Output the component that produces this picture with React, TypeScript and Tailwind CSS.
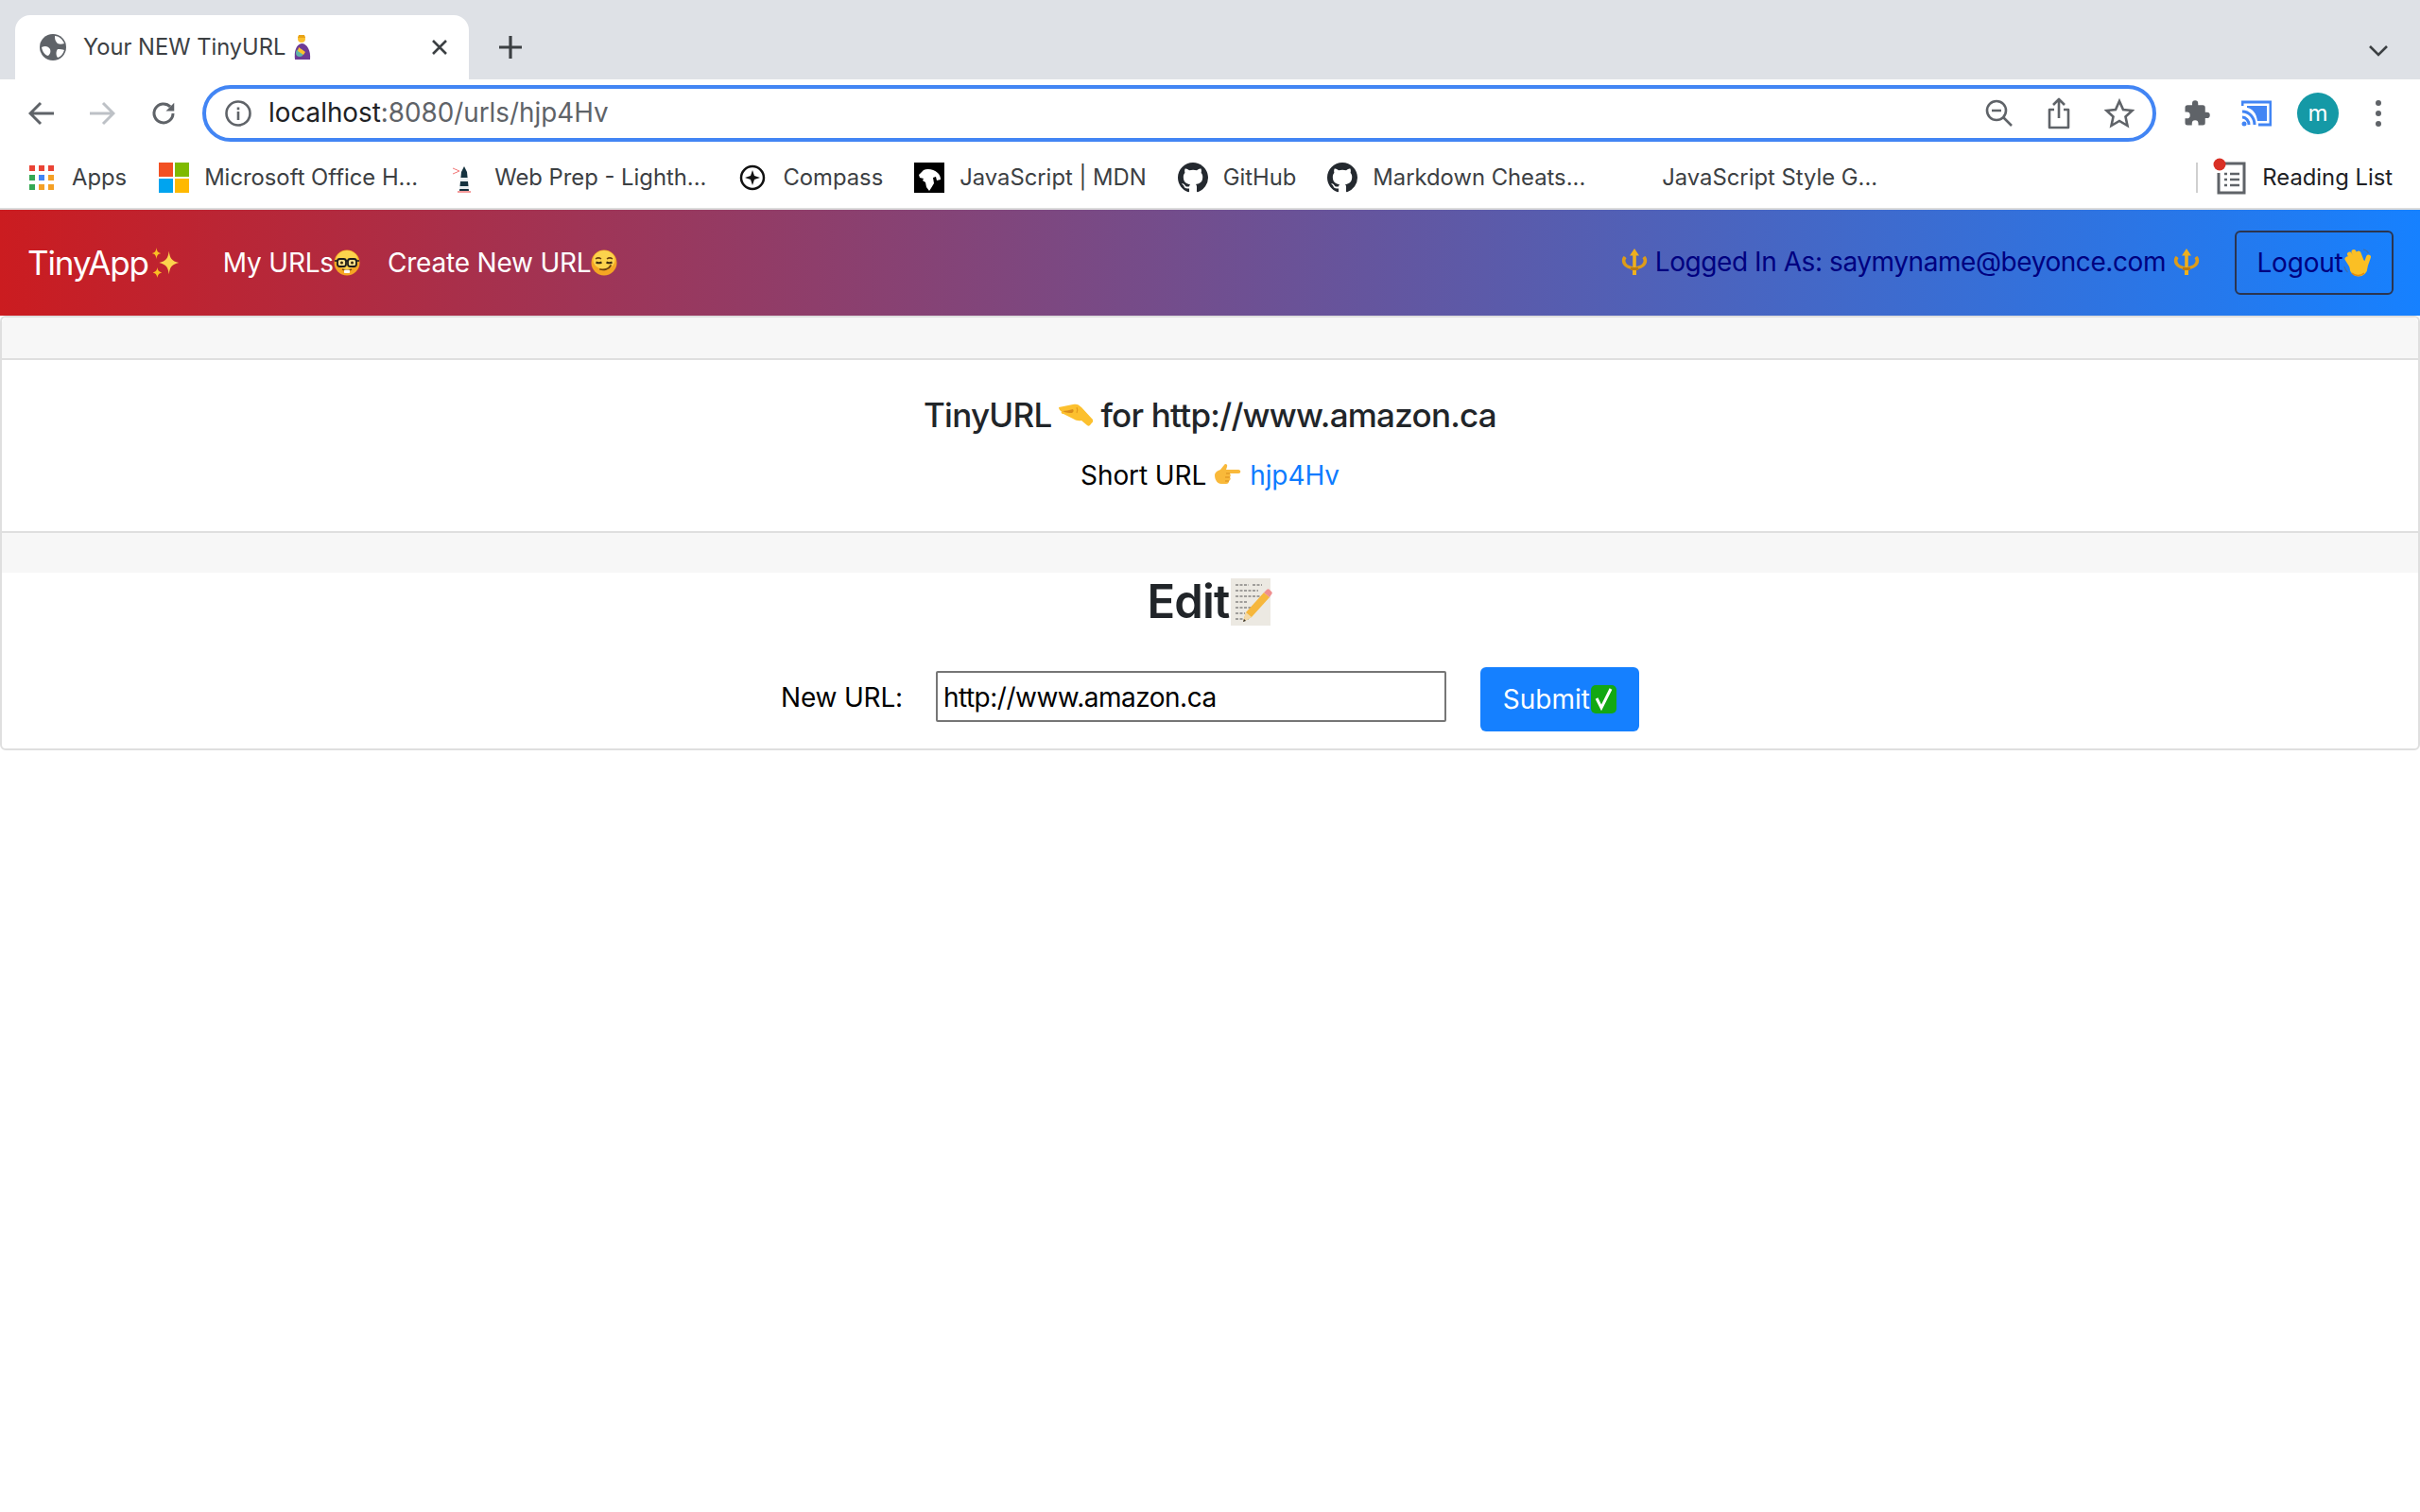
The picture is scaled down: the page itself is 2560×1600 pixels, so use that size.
import type { ReactNode } from "react";

const inter = "font-['Inter','Noto_Sans',sans-serif]";

function Sparkles({ size = 34 }: { size?: number }) {
  return (
    <svg width={size} height={size} viewBox="0 0 36 36" className="inline-block shrink-0">
      <path d="M23 5c1 8 3 11 11 13-8 2-10 5-11 13-1-8-3-11-11-13 8-2 10-5 11-13z" fill="#fcd34d" />
      <path d="M9 1c.5 4 1.500 5.500 5 6.500-3.500 1-4.500 2.500-5 6.500-.5-4-1.500-5.500-5-6.500 3.500-1 4.500-2.500 5-6.500z" fill="#fbbf24" />
      <path d="M10 23c.5 3.500 1.500 5 5 6-3.500 1-4.500 2.500-5 6-.5-3.500-1.500-5-5-6 3.500-1 4.500-2.500 5-6z" fill="#fbbf24" />
    </svg>
  );
}

function Face({ kind }: { kind: "nerd" | "smirk" }) {
  return (
    <svg width="28" height="28" viewBox="0 0 28 28" className="inline-block shrink-0">
      <circle cx="14" cy="14" r="13.500" fill="#f5a623" />
      <ellipse cx="14" cy="11" rx="11.500" ry="10" fill="#fcd34d" />
      {kind === "nerd" ? (
        <>
          <path d="M1 12h26" stroke="#1c1c1c" strokeWidth="1.600" />
          <rect x="4" y="10" width="9" height="8" rx="2.500" fill="#f8e08a" stroke="#1c1c1c" strokeWidth="1.800" />
          <rect x="15" y="10" width="9" height="8" rx="2.500" fill="#f8e08a" stroke="#1c1c1c" strokeWidth="1.800" />
          <circle cx="8.500" cy="14" r="1.500" fill="#3a2a10" />
          <circle cx="19.500" cy="14" r="1.500" fill="#3a2a10" />
          <path d="M9 21c3 1.200 7 1.200 10 0" stroke="#7a4a10" strokeWidth="1.400" fill="none" />
          <rect x="11" y="21.500" width="6" height="3.500" rx="0.800" fill="#fff" />
        </>
      ) : (
        <>
          <path d="M5 10c2-1.500 4-1.500 6 0M17 10c2-1.500 4-1.500 6 0" stroke="#6b3f10" strokeWidth="1.500" fill="none" />
          <path d="M5.500 13.500c2 1 4 1 6 0M16.500 13.500c2 1 4 1 6 0" stroke="#3a2a10" strokeWidth="2" fill="none" />
          <path d="M10 21c4 1 9 0 11-4" stroke="#6b3f10" strokeWidth="1.800" fill="none" strokeLinecap="round" />
        </>
      )}
    </svg>
  );
}

function Trident() {
  return (
    <svg width="30" height="30" viewBox="0 0 30 30" className="inline-block shrink-0">
      <path d="M15 1l5 7.500h-3.200V22h-3.600V8.500H10z" fill="#eeb01f" />
      <path
        d="M3.500 9C2 11 1.500 13 2 15.500c1 4 5 7 11.500 7.500v-3c-4.500-.5-7.500-2.500-8-5.500-.2-1.500.3-2.200 1-3-.5-1-1.500-2-3-2.500zM26.500 9c1.500 2 2 4 1.500 6.500-1 4-5 7-11.500 7.500v-3c4.500-.5 7.500-2.500 8-5.500.2-1.500-.3-2.200-1-3 .5-1 1.500-2 3-2.500z"
        fill="#dd9c1a"
      />
      <rect x="11" y="21" width="8" height="3" fill="#b97a12" />
      <rect x="13" y="24" width="4" height="5" fill="#eeb01f" />
    </svg>
  );
}

function Wave() {
  return (
    <svg width="30" height="30" viewBox="0 0 30 30" className="inline-block shrink-0">
      <g stroke="#fbbf24" strokeWidth="5" strokeLinecap="round">
        <path d="M9 19L4 11M11 15L6.500 6M15 13L11 3.500M19 13L16 5M23 19L26.500 9" />
      </g>
      <circle cx="16" cy="20" r="9.500" fill="#fbbf24" />
      <path d="M9 26c3 3 9 3.500 13 0" stroke="#e08a12" strokeWidth="1.600" fill="none" />
      <path d="M1 19c.6 2.500 1.800 4.500 3.500 6M21 1c2.500.5 4.500 2 5.500 4" stroke="#3f6fa8" strokeWidth="1.200" fill="none" />
    </svg>
  );
}

function Pinch() {
  return (
    <svg width="36" height="24" viewBox="0 0 36 24" className="inline-block shrink-0">
      <path
        d="M0 4C5 3 10 2 15 1c4-1 6 0 9 3l12 13c1 1.500 0 2.500-1 3.500l-2 2.500c-1 1-2 1-3 0l-6-5c-3 .5-6 0-8-1.500L5 11C3 11 2 9 3 8.500 1.500 8 0 6 0 4z"
        fill="#fcc02e"
      />
      <path d="M4 8c3 0 7-1 11-2 1 1 1 3-1 4-3 0-6 0-10-2z" fill="#d98c1a" />
      <path d="M19 4c1 2 1 4 0 6" stroke="#e59a1c" strokeWidth="1.200" fill="none" />
    </svg>
  );
}

function Point() {
  return (
    <svg width="30" height="30" viewBox="0 0 30 30" className="inline-block shrink-0">
      <path
        d="M1 15c0-3 3-5 6-6l4-5c1-2 4-1 3 2l-1 3h13c3 0 3 4 0 4H17c1 1 1 3 0 4 1 1 1 3-1 4 0 2-1 3-3 3H8c-4 0-7-4-7-9z"
        fill="#f9b93a"
      />
      <path d="M13 13h4M17 17h-5M16 21h-4" stroke="#d98c1a" strokeWidth="1" />
    </svg>
  );
}

function Memo() {
  return (
    <svg width="46" height="52" viewBox="0 0 46 52" className="inline-block shrink-0">
      <rect x="1" y="1" width="42" height="50" fill="#ece9e2" />
      <path
        d="M6 8h14M24 8h10M6 14h24M6 20h30M6 26h12M6 32h20M6 38h10M6 44h14"
        stroke="#555"
        strokeWidth="1.100"
        strokeDasharray="3 1.500"
      />
      <path d="M14 47l3-10 19-21 6 5-19 21z" fill="#f6b73c" />
      <path d="M36 16l3-3c1-1 2-1 3 0l2 2c1 1 1 2 0 3l-2 3z" fill="#ef8f8f" />
      <path d="M14 47l3-10 6 5z" fill="#f3d9a8" />
      <path d="M14 47l1-3 2 2z" fill="#333" />
    </svg>
  );
}

function Check() {
  return (
    <svg width="30" height="32" viewBox="0 0 30 32" className="inline-block shrink-0">
      <rect x="1" y="1" width="27" height="30" rx="5" fill="#13a813" />
      <path d="M7 15l5 10 10-20" stroke="#fff" strokeWidth="3" fill="none" />
    </svg>
  );
}

function PersonBaby() {
  return (
    <svg width="20" height="28" viewBox="0 0 20 28" className="inline-block shrink-0">
      <circle cx="9" cy="5" r="4" fill="#fbc02d" />
      <path d="M6 1h6l1 3H5z" fill="#e8a317" />
      <path d="M2 27c-1-8 1-16 7-17 6 0 10 8 9 17z" fill="#6d3a96" />
      <circle cx="7" cy="20" r="4" fill="#5fb3a8" />
      <path d="M6 14l7 5-2 3-6-4z" fill="#fbc02d" />
    </svg>
  );
}

function Globe() {
  return (
    <svg width="28" height="28" viewBox="0 0 28 28" className="shrink-0">
      <circle cx="14" cy="14" r="14" fill="#5f6368" />
      <path d="M2 14c4-2 7-1 9 2 1 3 0 5-2 7-2 0-6-3-7-9zM16 2c4 0 8 3 10 8-3 1-7 1-8-1-2-2-2-5-2-7zM19 16c3 0 5 0 7 1-1 4-4 7-7 8-2-2-2-7 0-9z" fill="#fff" />
    </svg>
  );
}

function GithubMark() {
  return (
    <svg width="32" height="32" viewBox="0 0 16 16" className="shrink-0" fill="#24292f">
      <path d="M8 0C3.580 0 0 3.580 0 8c0 3.540 2.290 6.530 5.470 7.590.4.070.55-.17.55-.38 0-.19-.01-.82-.01-1.490-2.010.37-2.530-.49-2.690-.94-.09-.23-.48-.94-.82-1.130-.28-.15-.68-.52-.01-.53.63-.01 1.080.58 1.230.82.720 1.210 1.870.870 2.330.660.070-.520.280-.870.510-1.070-1.780-.2-3.640-.890-3.640-3.950 0-.870.310-1.590.820-2.150-.080-.2-.360-1.020.080-2.120 0 0 .670-.210 2.200.820.640-.180 1.320-.270 2-.270s1.360.090 2 .270c1.530-1.040 2.200-.820 2.200-.820.440 1.100.160 1.920.080 2.120.510.560.820 1.270.820 2.150 0 3.070-1.870 3.750-3.650 3.950.290.250.540.730.540 1.480 0 1.070-.010 1.930-.010 2.200 0 .210.150.460.550.380A8.013 8.013 0 0016 8c0-4.420-3.580-8-8-8z" />
    </svg>
  );
}

function Bookmark({ icon, label }: { icon: ReactNode; label: string }) {
  return (
    <div className="flex items-center gap-4">
      {icon}
      <span>{label}</span>
    </div>
  );
}

const appColors = ["#ea4335", "#ea4335", "#ea4335", "#34a853", "#4285f4", "#f4a025", "#34a853", "#f4a025", "#f4a025"];

function ChromeBars() {
  return (
    <div className={`${inter} text-[#3c4043]`}>
      {/* tab strip */}
      <div className="h-[84px] bg-[#dee1e6] flex items-end pl-4 pr-[34px]">
        <div className="w-[480px] h-[68px] bg-white rounded-t-[16px] flex items-center pl-[26px] pr-[22px] text-[23.700px]">
          <Globe />
          <span className="ml-[18px] flex items-center gap-2">
            Your NEW TinyURL <PersonBaby />
          </span>
          <svg width="18" height="18" viewBox="0 0 18 18" className="ml-auto">
            <path d="M2 2l14 14M16 2L2 16" stroke="#3c4043" strokeWidth="2.600" />
          </svg>
        </div>
        <svg width="24" height="24" viewBox="0 0 24 24" className="ml-[32px] mb-[22px]">
          <path d="M12 0v24M0 12h24" stroke="#3c4043" strokeWidth="3.200" />
        </svg>
        <svg width="20" height="12" viewBox="0 0 20 12" className="ml-auto mb-[24px]">
          <path d="M1 1l9 9 9-9" stroke="#3c4043" strokeWidth="2.600" fill="none" />
        </svg>
      </div>

      {/* address row */}
      <div className="h-[72px] bg-white flex items-center pl-[30px] pr-[20px]">
        <svg width="28" height="26" viewBox="0 0 28 26">
          <path d="M27 13H3M13 2L2 13l11 11" stroke="#5f6368" strokeWidth="3" fill="none" />
        </svg>
        <svg width="28" height="26" viewBox="0 0 28 26" className="ml-[36px]">
          <path d="M1 13h24M15 2l11 11-11 11" stroke="#bdc1c6" strokeWidth="3" fill="none" />
        </svg>
        <svg width="30" height="30" viewBox="0 0 24 24" className="ml-[36px]">
          <path d="M20 12a8 8 0 1 1-2.300-5.700" stroke="#5f6368" strokeWidth="2.400" fill="none" />
          <path d="M21 3v7h-7z" fill="#5f6368" />
        </svg>
        <div className="ml-[26px] w-[2067px] h-[60px] rounded-full border-[4px] border-[#4285f4] flex items-center pl-[20px] pr-[19px]">
          <svg width="28" height="28" viewBox="0 0 28 28" className="shrink-0">
            <circle cx="14" cy="14" r="12.500" stroke="#5f6368" strokeWidth="2.600" fill="none" />
            <rect x="12.700" y="12" width="2.600" height="9" fill="#5f6368" />
            <rect x="12.700" y="7.500" width="2.600" height="2.800" fill="#5f6368" />
          </svg>
          <span className="ml-[18px] text-[27.800px] text-[#202124]">
            localhost<span className="text-[#5f6368]">:8080/urls/hjp4Hv</span>
          </span>
          <div className="ml-auto flex items-center gap-[35px]">
            <svg width="30" height="30" viewBox="0 0 30 30">
              <circle cx="12" cy="12" r="10" stroke="#5f6368" strokeWidth="2.600" fill="none" />
              <path d="M7 12h10M19 19l9 9" stroke="#5f6368" strokeWidth="2.600" />
            </svg>
            <svg width="26" height="34" viewBox="0 0 26 34">
              <path d="M8 13H3v19h20V13h-5M13 22V2M7 8l6-6 6 6" stroke="#5f6368" strokeWidth="2.600" fill="none" strokeLinejoin="round" />
            </svg>
            <svg width="32" height="32" viewBox="0 0 32 32">
              <path d="M16 3l4 9 9.500 1-7 6.500 2 9.500-8.500-5-8.500 5 2-9.500-7-6.500 9.500-1z" stroke="#5f6368" strokeWidth="2.600" fill="none" />
            </svg>
          </div>
        </div>
        <svg width="30" height="30" viewBox="0 0 24 24" className="ml-[28px] shrink-0" fill="#5f6368">
          <path d="M20.500 11H19V7a2 2 0 0 0-2-2h-4V3.500a2.500 2.500 0 0 0-5 0V5H4a2 2 0 0 0-2 2v3.800h1.500a2.700 2.700 0 0 1 0 5.400H2V20a2 2 0 0 0 2 2h3.800v-1.500a2.700 2.700 0 0 1 5.400 0V22H17a2 2 0 0 0 2-2v-4h1.500a2.500 2.500 0 0 0 0-5z" />
        </svg>
        <svg width="32" height="28" viewBox="0 0 32 28" className="ml-[32px] shrink-0">
          <path d="M1 6V2h30v24H18" stroke="#4285f4" strokeWidth="3" fill="none" />
          <path d="M6 6h21v16H17C16 14 12 9 6 8z" fill="#4285f4" />
          <path d="M1 12c7 0 13 6 13 14M1 18c4 0 7 4 7 8" stroke="#4285f4" strokeWidth="3" fill="none" />
          <circle cx="3" cy="25" r="2.500" fill="#4285f4" />
        </svg>
        <div className="ml-[27px] w-[44px] h-[44px] rounded-full bg-[#1599a6] text-white text-[24px] flex items-center justify-center shrink-0">
          m
        </div>
        <div className="ml-[39px] flex flex-col gap-[5px] shrink-0">
          <div className="w-[6px] h-[6px] rounded-full bg-[#5f6368]" />
          <div className="w-[6px] h-[6px] rounded-full bg-[#5f6368]" />
          <div className="w-[6px] h-[6px] rounded-full bg-[#5f6368]" />
        </div>
      </div>

      {/* bookmarks */}
      <div className="h-[66px] bg-white border-b-2 border-[#dcdcdc] flex items-center pl-[31px] pr-[29px] gap-[33px] text-[23.800px]">
        <div className="flex items-center gap-[19px]">
          <div className="grid grid-cols-3 gap-[4px] w-[26px]">
            {appColors.map((c, i) => (
              <div key={i} className="w-[6px] h-[6px]" style={{ background: c }} />
            ))}
          </div>
          <span className="mr-[1px]">Apps</span>
        </div>
        <Bookmark
          icon={
            <svg width="32" height="32" viewBox="0 0 32 32" className="shrink-0">
              <rect width="15" height="15" fill="#f25022" />
              <rect x="17" width="15" height="15" fill="#7fba00" />
              <rect y="17" width="15" height="15" fill="#00a4ef" />
              <rect x="17" y="17" width="15" height="15" fill="#ffb900" />
            </svg>
          }
          label="Microsoft Office H..."
        />
        <Bookmark
          icon={
            <svg width="32" height="32" viewBox="0 0 32 32" className="shrink-0">
              <path d="M4 6l7 3-7 3" stroke="#f27a7a" strokeWidth="1" fill="none" />
              <path d="M13 10l3-6 3 6 2 20H11z" fill="#14323f" />
              <path d="M12 16h8l.5 4h-9zM11 25h10v3H11z" fill="#e8eef0" />
              <path d="M9 31h14" stroke="#f27a7a" strokeWidth="1.500" />
            </svg>
          }
          label="Web Prep - Lighth..."
        />
        <Bookmark
          icon={
            <svg width="32" height="32" viewBox="0 0 32 32" className="shrink-0">
              <circle cx="16" cy="16" r="12" stroke="#111" strokeWidth="2.500" fill="none" />
              <path d="M16 8l2 6 6 2-6 2-2 6-2-6-6-2 6-2z" fill="#111" />
            </svg>
          }
          label="Compass"
        />
        <Bookmark
          icon={
            <svg width="32" height="32" viewBox="0 0 32 32" className="shrink-0">
              <rect width="32" height="32" fill="#000" />
              <path d="M5 13l5-5c4-2 11-1 15 3 2 2 3 4 3 7l-4 1-1-4-3 1 1 6-3 5-2 3-3-4-1-5-3-2 1-2-4-1z" fill="#fff" />
            </svg>
          }
          label="JavaScript | MDN"
        />
        <Bookmark icon={<GithubMark />} label="GitHub" />
        <Bookmark icon={<GithubMark />} label="Markdown Cheats..." />
        <Bookmark icon={<div className="w-8 h-8" />} label="JavaScript Style G..." />
        <div className="ml-auto flex items-center">
          <div className="w-[2px] h-8 bg-[#d0d0d0]" />
          <svg width="36" height="42" viewBox="0 0 36 42" className="ml-[16px] shrink-0">
            <path d="M10 6h23v31H6V16" stroke="#5f6368" strokeWidth="3" fill="none" />
            <path d="M12 17h3M18 17h10M12 23h3M18 23h10M12 29h3M18 29h10" stroke="#5f6368" strokeWidth="2.500" />
            <circle cx="7" cy="7" r="6.500" fill="#d93025" />
          </svg>
          <span className="ml-[16px] text-[#202124]">Reading List</span>
        </div>
      </div>
    </div>
  );
}

function Navbar() {
  return (
    <nav className="h-[112px] bg-linear-to-r/srgb from-[#cb1c20] to-[#1681ff] flex items-center pl-[29px] pr-[28px]">
      <span className="flex items-center text-[35px] tracking-[-1.100px] text-white">
        TinyApp
        <Sparkles />
      </span>
      <span className="ml-[45px] flex items-center text-[28px] tracking-[-0.200px] text-white">
        My URLs
        <Face kind="nerd" />
      </span>
      <span className="ml-[29px] flex items-center text-[28px] tracking-[-0.200px] text-white">
        Create New URL
        <Face kind="smirk" />
      </span>
      <span className="ml-auto flex items-center text-[28px] tracking-[-0.430px] text-[#000080] -mt-[2px]">
        <Trident />
        <span className="mx-[7px]">Logged In As: saymyname@beyonce.com</span>
        <Trident />
      </span>
      <button className="ml-[36px] w-[168px] h-[68px] border-2 border-[#2b3550] rounded-[6px] flex items-center justify-center text-[28px] tracking-[-0.200px] text-[#000080]">
        Logout
        <Wave />
      </button>
    </nav>
  );
}

function Card() {
  return (
    <div className="border-2 border-[#dfdfdf] rounded-[6px] bg-white text-[#212529]">
      <div className="h-[45px] bg-[#f7f7f7] border-b-2 border-[#dfdfdf] rounded-t-[6px]" />
      <div className="h-[181px] flex flex-col items-center pt-[37px]">
        <h5 className="flex items-center gap-2 text-[35px] tracking-[-0.750px] font-medium leading-[42px]">
          TinyURL <Pinch /> for http://www.amazon.ca
        </h5>
        <p className="mt-[22px] flex items-center text-[28px] tracking-[-0.100px] leading-[42px] text-black">
          Short URL
          <span className="mx-[8px] flex"><Point /></span>
          <a className="text-[#0d7bff]">hjp4Hv</a>
        </p>
      </div>
      <div className="h-[44px] bg-[#f7f7f7] border-t-2 border-[#dfdfdf]" />
      <div className="h-[186px] flex flex-col items-center">
        <h3 className="mt-[2px] h-[58px] flex items-center text-[49px] tracking-[-0.800px] font-semibold">
          Edit
          <Memo />
        </h3>
        <form className="mt-[40px] flex items-start text-[28px]">
          <label className="mt-[5px] leading-[54px] tracking-[-0.200px] text-black">New URL:</label>
          <input
            defaultValue="http://www.amazon.ca"
            className={`${inter} mt-[4px] ml-[35px] w-[540px] h-[54px] border-2 border-[#767676] rounded-[2px] px-[6px] pt-[2px] text-[28px] tracking-[-0.500px] text-black`}
          />
          <button
            type="button"
            className="ml-[36px] w-[168px] h-[68px] bg-[#1580ff] rounded-[6px] text-white flex items-center justify-center pl-[2px]"
          >
            Submit
            <Check />
          </button>
        </form>
      </div>
    </div>
  );
}

export default function App() {
  return (
    <div className={`${inter} w-[2560px] h-[1600px] bg-white overflow-hidden`}>
      <ChromeBars />
      <Navbar />
      <Card />
    </div>
  );
}
